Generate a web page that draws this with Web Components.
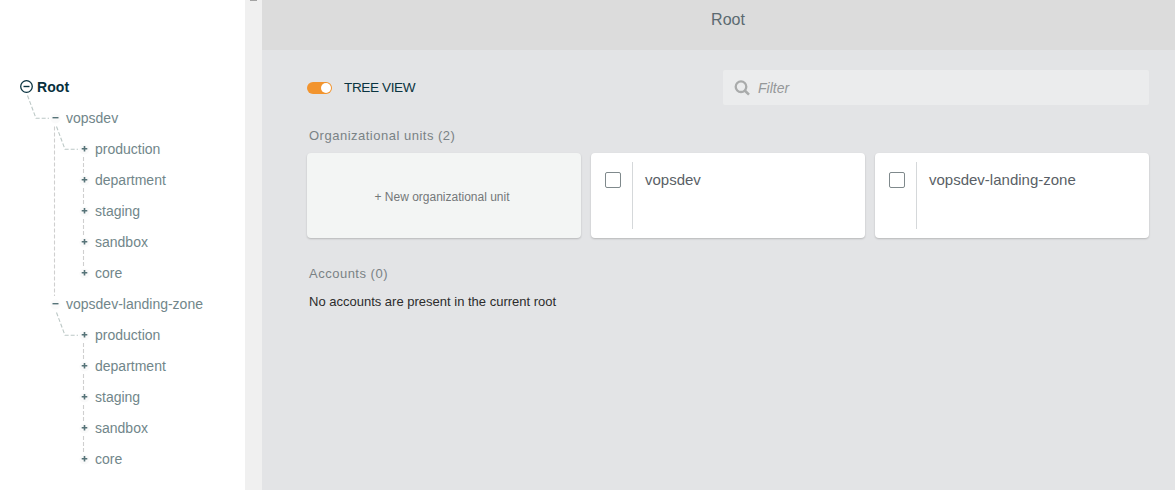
<!DOCTYPE html>
<html lang="en"><head><meta charset="utf-8"><title>Organizational units</title>
<style>html,body{margin:0;height:100%;overflow:hidden;background:#fff}body{font-family:"Liberation Sans",Arial,sans-serif}</style></head>
<body>
<org-app></org-app>
<script>
const define = (name, html, init) => customElements.define(name, class extends HTMLElement {
  constructor() {
    super();
    this.attachShadow({ mode: 'open' });
  }
  connectedCallback() {
    this.shadowRoot.innerHTML = html;
    if (init) init(this, this.shadowRoot);
  }
});

/* One row of the tree: marker and label */
define('tree-row', `<style>
:host{display:flex;align-items:center;height:31px;box-sizing:border-box;padding-left:var(--indent,78px);color:#71868a;font-size:14px;line-height:18px;white-space:nowrap;position:relative}
svg{display:block;flex:none;width:13px;height:13px;margin-right:4px}
span{padding-bottom:2px}
:host([kind=root]){color:#072f3c;font-weight:bold;letter-spacing:.1px}
:host([kind=root]) svg{margin-bottom:2px}
</style><svg viewBox="0 0 13 13"></svg><span><slot></slot></span>`, (el, root) => {
  const marks = {
    root: '<circle cx="6.5" cy="6.5" r="5.8" fill="none" stroke="#0b3441" stroke-width="1.3"/><path d="M3.5 6.5h6" stroke="#0b3441" stroke-width="1.4"/>',
    open: '<circle cx="6.5" cy="6.5" r="5" fill="#fafafa"/><path d="M3.5 5.700h6" stroke="#567378" stroke-width="1.4"/>',
    leaf: '<circle cx="6.5" cy="6.5" r="5" fill="#fafafa"/><path d="M3.700 5.700h5.600M6.500 3v5.400" stroke="#567378" stroke-width="1.6"/>'
  };
  root.querySelector('svg').innerHTML = marks[el.getAttribute('kind') || 'leaf'];
});

define('org-tree', `<style>
:host{display:block;position:relative;width:245px;height:490px;box-sizing:border-box;padding-top:72px;background:#fff}
.lines{position:absolute;left:0;top:0}
[kind=root]{--indent:20px}[kind=open]{--indent:49px}
</style>
<svg class="lines" width="245" height="490" fill="none" stroke="#bcc8c6" stroke-width="1.1" stroke-dasharray="4 2">
<path d="M27.5 95.5L36 118.300H49M56.500 126.500L65 149.300H78M56.500 312.500L65 335.300H78"/>
<path d="M54.500 126.500V296M83.500 157V173M83.500 188V204M83.500 219V235M83.500 250V266M83.500 343V359M83.500 374V390M83.500 405V421M83.500 436V452" stroke="#cfcfcf"/>
</svg>
<tree-row kind="root">Root</tree-row>
<tree-row kind="open">vopsdev</tree-row>
<tree-row>production</tree-row><tree-row>department</tree-row><tree-row>staging</tree-row><tree-row>sandbox</tree-row><tree-row>core</tree-row>
<tree-row kind="open">vopsdev-landing-zone</tree-row>
<tree-row>production</tree-row><tree-row>department</tree-row><tree-row>staging</tree-row><tree-row>sandbox</tree-row><tree-row>core</tree-row>`);

define('scroll-track', `<style>:host{display:block;width:17px;background:#f0f0f0}i{display:block;width:7px;height:1px;margin-left:5px;background:#a3a3a3}</style><i></i>`);

define('toggle-switch', `<style>
:host{display:flex;align-items:center;color:#0b3441;font-size:13.6px;line-height:18px;letter-spacing:-.4px}
i{display:flex;justify-content:flex-end;box-sizing:border-box;width:25px;height:12px;padding:1px;border-radius:6px;background:#f2942e;margin-right:12px}
b{width:10px;height:10px;border-radius:50%;background:#fff}
</style><i><b></b></i><slot></slot>`);

define('filter-box', `<style>
:host{display:flex;align-items:center;box-sizing:border-box;width:426px;height:35px;padding-left:11px;border-radius:2px;background:#ebeced;color:#959899;font-size:14px;font-style:italic}
svg{margin-right:8px}
</style><svg width="16" height="16" viewBox="0 0 16 16" fill="none" stroke="#a9abab" stroke-width="2.300"><circle cx="7" cy="6.700" r="5.300"/><path d="M10.700 10.500L15 14.600" stroke-width="2.600"/></svg><slot></slot>`);

define('unit-card', `<style>
:host{display:flex;box-sizing:border-box;height:85px;border-radius:4px;background:#fff;box-shadow:0 1px 2px rgba(0,0,0,.2);color:#5a5f66;font-size:15px;line-height:18px;padding:9px 0 9px 14px}
i{box-sizing:border-box;width:16px;height:16px;margin:10px 11px 0 0;border:1px solid #7f898c;border-radius:2px}
div{border-left:1px solid #d5d8da;padding:9px 0 0 12px}
</style><i></i><div><slot></slot></div>`);

define('new-unit-card', `<style>
:host{display:flex;align-items:center;justify-content:center;box-sizing:border-box;height:85px;padding:3px 4px 0 0;border-radius:4px;background:#f3f5f4;box-shadow:0 1px 2px rgba(0,0,0,.2);color:#737879;font-size:12px}
span{display:block}
</style><span><slot></slot></span>`);

define('section-title', `<style>:host{display:block;padding-left:2px;font-size:13px;line-height:16px;letter-spacing:.5px;color:#7a8285}</style><slot></slot>`);

define('org-app', `<style>
:host{display:grid;grid-template-columns:245px 17px 913px;width:1175px;height:490px;overflow:hidden}
main{background:#e3e4e6}
header{box-sizing:border-box;height:50px;padding:10px 0 0 19px;text-align:center;background:#dcdcdc;color:#5b6a70;font-size:16px;line-height:20px}
.body{padding:20px 26px 0 45px}
.bar{display:flex;justify-content:space-between;align-items:center;margin-bottom:23px}
.cards{display:grid;grid-template-columns:repeat(3,274px);gap:10px;margin:9px 0 28px}
p{margin:12px 0 0 2px;font-size:13px;line-height:16px;color:#2c2c2c}
</style>
<org-tree></org-tree><scroll-track></scroll-track>
<main><header>Root</header><div class="body">
<div class="bar"><toggle-switch>TREE VIEW</toggle-switch><filter-box>Filter</filter-box></div>
<section-title>Organizational units (2)</section-title>
<div class="cards"><new-unit-card>+ New organizational unit</new-unit-card><unit-card>vopsdev</unit-card><unit-card>vopsdev-landing-zone</unit-card></div>
<section-title>Accounts (0)</section-title>
<p>No accounts are present in the current root</p>
</div></main>`);
</script>
</body></html>
